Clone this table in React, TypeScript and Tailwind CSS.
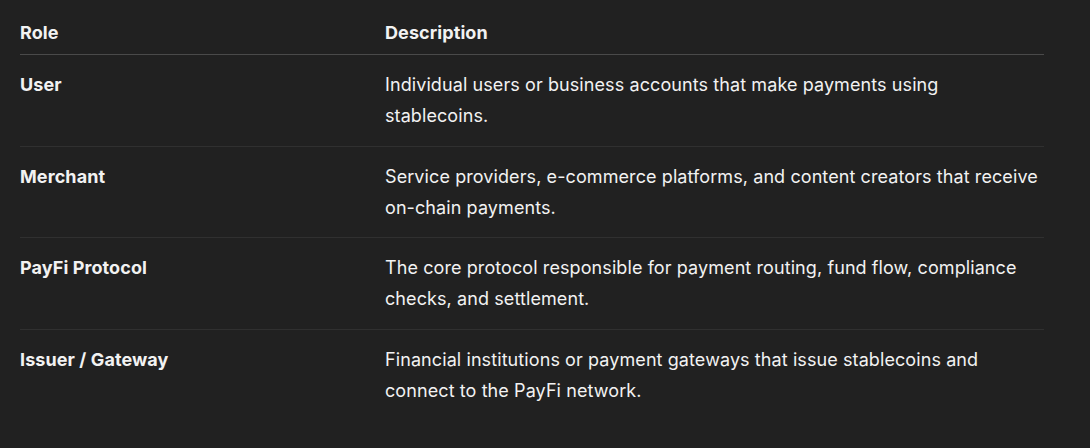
const rows = [
  {
    role: "User",
    desc: "Individual users or business accounts that make payments using stablecoins.",
  },
  {
    role: "Merchant",
    desc: "Service providers, e-commerce platforms, and content creators that receive on-chain payments.",
  },
  {
    role: "PayFi Protocol",
    desc: "The core protocol responsible for payment routing, fund flow, compliance checks, and settlement.",
  },
  {
    role: "Issuer / Gateway",
    desc: "Financial institutions or payment gateways that issue stablecoins and connect to the PayFi network.",
  },
]

export default function App() {
  return (
    <div
      className="w-[1090px] h-[448px] bg-[#212121] text-[#f2f2f2] pl-5 pt-[17px]"
      style={{ fontFamily: "Inter, 'Noto Sans', sans-serif" }}
    >
      <table className="w-[1024px] border-collapse text-[18px] leading-[31px] tracking-[0.005em]">
        <thead>
          <tr className="border-b border-[#4a4a4a]">
            <th className="w-[365px] text-left font-bold pb-[6px] pt-0 align-top">Role</th>
            <th className="text-left font-bold pb-[6px] pt-0 align-top">Description</th>
          </tr>
        </thead>
        <tbody>
          {rows.map((r, i) => (
            <tr key={r.role} className={i < rows.length - 1 ? "border-b border-[#303030]" : ""}>
              <td className="font-bold align-top pt-[14px] pb-[14.5px]">{r.role}</td>
              <td className="align-top pt-[14px] pb-[14.5px]">{r.desc}</td>
            </tr>
          ))}
        </tbody>
      </table>
    </div>
  )
}
